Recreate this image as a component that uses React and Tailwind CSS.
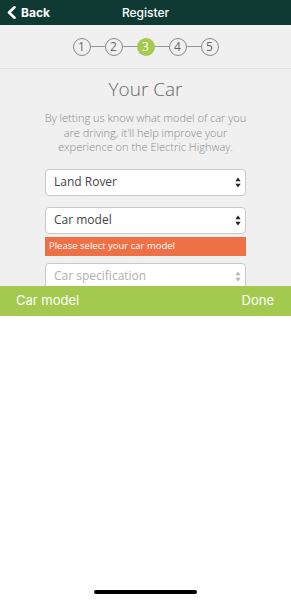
import React from 'react';

const os = { fontFamily: '"Open Sans", "Liberation Sans", sans-serif' };
const sf = { fontFamily: 'Inter, Roboto, "Liberation Sans", sans-serif' };

function Arrows({ faded }) {
  const c = faded ? '#b5b5b5' : '#222';
  return (
    <svg width="6" height="11" viewBox="0 0 6 11">
      <path d="M3 0.5 L5.6 4.3 L0.4 4.3 Z" fill={c} />
      <path d="M3 10.5 L5.6 6.7 L0.4 6.7 Z" fill={c} />
    </svg>
  );
}

function Select({ label, faded }) {
  return (
    <div className="flex h-[27px] w-[201px] items-center justify-between rounded-[4px] border border-[#c9c9c9] bg-white pl-[8px] pr-[4px]">
      <span className={`text-[12px] ${faded ? 'text-[#b0b0b0]' : 'text-[#444]'}`} style={os}>{label}</span>
      <Arrows faded={faded} />
    </div>
  );
}

function Step({ n, active }) {
  return active ? (
    <div className="flex h-[18px] w-[18px] items-center justify-center rounded-full bg-[#a3c94f] text-[12px] text-white" style={os}>{n}</div>
  ) : (
    <div className="flex h-[18px] w-[18px] items-center justify-center rounded-full border border-[#8a8a8a] text-[12px] text-[#666]" style={os}>{n}</div>
  );
}

export default function App() {
  return (
    <div className="flex h-[600px] w-[291px] flex-col bg-white">
      {/* Header */}
      <div className="grid h-[25px] grid-cols-3 items-center bg-[#0e3a33] text-white" style={sf}>
        <div className="flex items-center gap-[5px] pl-[7px]">
          <svg width="9" height="13" viewBox="0 0 9 13">
            <path d="M7.5 1.2 L2 6.5 L7.5 11.8" stroke="white" strokeWidth="2.6" fill="none" strokeLinecap="round" strokeLinejoin="round" />
          </svg>
          <span className="text-[12px] font-bold">Back</span>
        </div>
        <div className="text-center text-[12px] font-medium">Register</div>
        <div />
      </div>

      {/* Stepper */}
      <div className="flex h-[44px] items-center justify-center border-b border-[#e3e3e3] bg-[#f0f0f0]">
        {[1, 2, 3, 4, 5].map((n, i) => (
          <React.Fragment key={n}>
            {i > 0 && <div className="h-px w-[14px] bg-[#9a9a9a]" />}
            <Step n={n} active={n === 3} />
          </React.Fragment>
        ))}
      </div>

      {/* Content */}
      <div className="flex h-[217px] flex-col items-center overflow-hidden bg-[#f0f0f0]">
        <h1 className="mt-[8px] text-[19px] font-light leading-[24px] text-[#666]" style={os}>Your Car</h1>
        <p className="mt-[10px] w-[215px] text-center text-[11px] font-light leading-[14.5px] text-[#888]" style={os}>
          By letting us know what model of car you are driving, it'll help improve your experience on the Electric Highway.
        </p>
        <div className="mt-[14px] flex flex-col">
          <Select label="Land Rover" />
          <div className="mt-[11px]">
            <Select label="Car model" />
          </div>
          <div className="mt-[3px] flex h-[19px] w-[201px] items-center bg-[#ee7046] pl-[4px] text-[9.5px] text-white" style={os}>
            Please select your car model
          </div>
          <div className="mt-[7px]">
            <Select label="Car specification" faded />
          </div>
        </div>
      </div>

      {/* Picker toolbar */}
      <div className="flex h-[30px] items-center justify-between bg-[#a3c94f] pl-[16px] pr-[17px] text-[13px] text-white" style={sf}>
        <span>Car model</span>
        <span>Done</span>
      </div>

      <div className="flex flex-1 items-end justify-center pb-[6px]">
        <div className="h-[4px] w-[103px] rounded-full bg-black" />
      </div>
    </div>
  );
}
